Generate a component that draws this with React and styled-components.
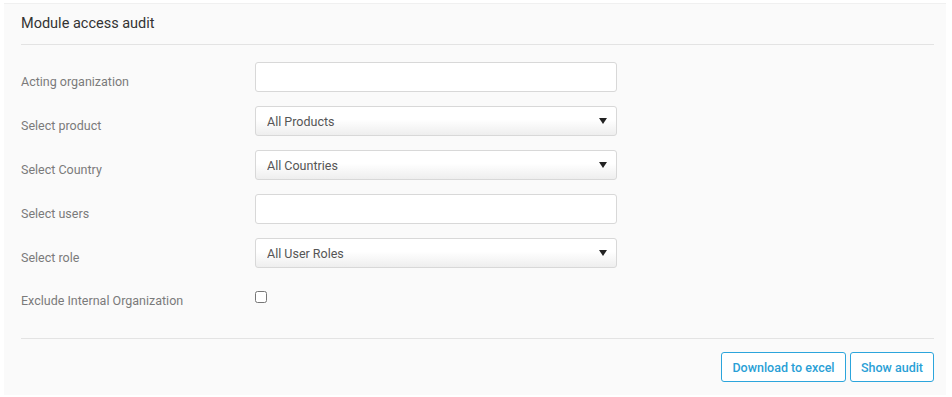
import React from "react";
import styled, { createGlobalStyle } from "styled-components";

const GlobalStyle = createGlobalStyle`
  html, body {
    margin: 0;
    padding: 0;
    background: #ffffff;
    font-family: Roboto, "Liberation Sans", Arial, sans-serif;
  }
  * { box-sizing: border-box; }
`;

const Page = styled.div`
  padding: 3px 6px 2px 4px;
`;

const Panel = styled.section`
  background: #fafafa;
  border-top: 1px solid #f0f0f0;
  padding: 0 12px 14px 17px;
  height: 392px;
`;

const Header = styled.div`
  height: 41px;
  border-bottom: 1px solid #e3e3e3;
  display: flex;
  align-items: center;
  padding-bottom: 2px;
`;

const Title = styled.h3`
  margin: 0;
  font-size: 14.5px;
  font-weight: 400;
  color: #333;
`;

const Form = styled.div`
  display: flex;
  flex-direction: column;
  gap: 14px;
  padding: 17px 0 0;
  height: 294px;
  border-bottom: 1px solid #e3e3e3;
`;

const Row = styled.div`
  display: grid;
  grid-template-columns: 234px 362px;
  align-items: start;
  height: ${(p) => (p.$short ? "26px" : "30px")};
`;

const Label = styled.label`
  font-size: 12.5px;
  color: #7a7a7a;
  padding-top: ${(p) => p.$top || "11px"};
  line-height: 18px;
`;

const TextInput = styled.input`
  height: 30px;
  width: 100%;
  border: 1px solid #d8d8d8;
  border-radius: 3px;
  background: #fff;
  font: inherit;
  outline: none;
`;

const SelectWrap = styled.div`
  position: relative;
  height: 30px;
  &::after {
    content: "";
    position: absolute;
    right: 10px;
    top: 12px;
    border-left: 4px solid transparent;
    border-right: 4px solid transparent;
    border-top: 6px solid #222;
    pointer-events: none;
  }
`;

const Select = styled.select`
  appearance: none;
  width: 100%;
  height: 30px;
  border: 1px solid #d8d8d8;
  border-radius: 3px;
  background: linear-gradient(#ffffff 0%, #ffffff 45%, #eeeeee 100%);
  padding: 0 11px;
  font-family: Roboto, "Liberation Sans", Arial, sans-serif;
  font-size: 12.5px;
  color: #555;
  outline: none;
`;

const Check = styled.input`
  margin: 9px 0 0;
  width: 12px;
  height: 12px;
  accent-color: #888;
`;

const Footer = styled.div`
  display: flex;
  justify-content: flex-end;
  gap: 4px;
  padding: 13px 0 0;
`;

const Button = styled.button`
  height: 30px;
  padding: 0;
  white-space: nowrap;
  background: #fff;
  border: 1.5px solid #2ca5dc;
  border-radius: 3px;
  color: #2a9fd6;
  font-family: Roboto, "Liberation Sans", Arial, sans-serif;
  font-size: 12.5px;
  font-weight: 500;
  cursor: pointer;
  width: ${(p) => p.$w};
`;

function SelectField({ value }) {
  return (
    <SelectWrap>
      <Select defaultValue={value}>
        <option>{value}</option>
      </Select>
    </SelectWrap>
  );
}

export default function App() {
  return (
    <Page>
      <GlobalStyle />
      <Panel>
        <Header>
          <Title>Module access audit</Title>
        </Header>
        <Form>
          <Row>
            <Label>Acting organization</Label>
            <TextInput />
          </Row>
          <Row>
            <Label>Select product</Label>
            <SelectField value="All Products" />
          </Row>
          <Row>
            <Label>Select Country</Label>
            <SelectField value="All Countries" />
          </Row>
          <Row>
            <Label>Select users</Label>
            <TextInput />
          </Row>
          <Row>
            <Label>Select role</Label>
            <SelectField value="All User Roles" />
          </Row>
          <Row $short>
            <Label $top="10px">Exclude Internal Organization</Label>
            <div>
              <Check type="checkbox" />
            </div>
          </Row>
        </Form>
        <Footer>
          <Button $w="125px">Download to excel</Button>
          <Button $w="84px">Show audit</Button>
        </Footer>
      </Panel>
    </Page>
  );
}
